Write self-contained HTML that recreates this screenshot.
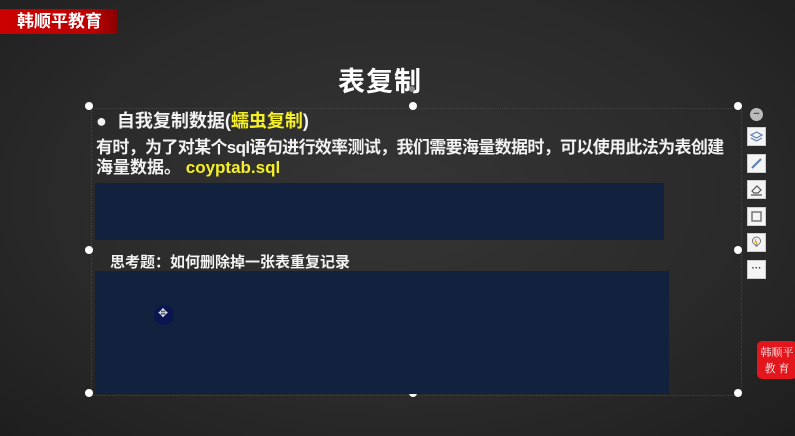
<!DOCTYPE html>
<html><head><meta charset="utf-8"><style>
*{margin:0;padding:0;box-sizing:border-box}
body{width:795px;height:436px;overflow:hidden;background:#2b2b2b;position:relative;font-family:"Liberation Sans","Noto Sans CJK SC",sans-serif;color:#f2f2f2;font-weight:bold}
.bg{position:absolute;inset:0;background:radial-gradient(ellipse at 50% 45%,#353535 0%,#2a2a2a 60%,#1e1e1e 100%)}
.logo{position:absolute;left:0;top:9px;width:117px;height:25px;background:linear-gradient(90deg,#c00 0%,#b00 80%,#8a0000 100%);color:#fff;font-size:17px;line-height:25px;padding-left:17px}
.title{position:absolute;left:338px;top:60px;font-size:27px;color:#fff;letter-spacing:1px}
.abs{position:absolute;white-space:nowrap}
.dot{position:absolute;width:8px;height:8px;border-radius:50%;background:#fff}
.blue{position:absolute;background:#12213d}
.y{color:#f5ef2a}
.tb{position:absolute;left:747px;width:19px;height:19px;background:#f4f4f4;border:1px solid #ccc}
.badge{position:absolute;left:757px;top:341px;width:40px;height:38px;background:#e2161c;border-radius:5px;color:#fff;font-family:"Noto Serif CJK SC",serif;font-size:11px;line-height:16px;text-align:center;padding-top:3px;font-weight:normal}
</style></head><body>
<div class="bg"></div>
<div class="logo">韩顺平教育</div>
<div class="title">表复制</div>
<div style="position:absolute;left:91px;top:108px;width:650px;height:1px;border-top:1px dotted #444"></div>
<div style="position:absolute;left:91px;top:108px;width:1px;height:288px;border-left:1px dotted #444"></div>
<div style="position:absolute;left:741px;top:108px;width:1px;height:288px;border-left:1px dotted #444"></div>
<div style="position:absolute;left:91px;top:395px;width:650px;height:1px;border-top:1px dotted #444"></div>
<div class="dot" style="left:85px;top:102px"></div>
<div class="dot" style="left:409px;top:102px"></div>
<div class="dot" style="left:734px;top:102px"></div>
<div class="dot" style="left:85px;top:246px"></div>
<div class="dot" style="left:734px;top:246px"></div>
<div class="dot" style="left:85px;top:389px"></div>
<div class="dot" style="left:409px;top:389px"></div>
<div class="dot" style="left:734px;top:389px"></div>
<div class="dot" style="left:409px;top:86px;width:6px;height:6px;background:#888"></div>
<div class="abs" style="left:96px;top:107px;font-size:18px">●&nbsp;&nbsp;自我复制数据(<span class="y">蠕虫复制</span>)</div>
<div class="abs" style="left:96px;top:133px;font-size:17px;letter-spacing:-0.65px">有时，为了对某个sql语句进行效率测试，我们需要海量数据时，可以使用此法为表创建</div>
<div class="abs" style="left:96px;top:153px;font-size:17px">海量数据。 <span class="y">coyptab.sql</span></div>
<div class="blue" style="left:95px;top:183px;width:569px;height:57px"></div>
<div class="abs" style="left:110px;top:251px;font-size:15px">思考题：如何删除掉一张表重复记录</div>
<div class="blue" style="left:95px;top:271px;width:574px;height:123px"></div>
<div style="position:absolute;left:154px;top:305px;width:20px;height:20px;border-radius:50%;background:#0b1650"></div>
<div class="abs" style="left:158px;top:306px;font-size:12px;color:#ddd;font-weight:normal">✥</div>
<div style="position:absolute;left:750px;top:108px;width:13px;height:13px;border-radius:50%;background:#bbb;color:#555;font-size:11px;line-height:12px;text-align:center">−</div>
<div class="tb" style="top:127px"></div>
<div class="tb" style="top:154px"></div>
<div class="tb" style="top:180px"></div>
<div class="tb" style="top:207px"></div>
<div class="tb" style="top:233px"></div>
<div class="tb" style="top:260px;font-size:10px;color:#444;text-align:center;line-height:16px">···</div>
<svg style="position:absolute;left:747px;top:127px" width="19" height="19"><path d="M4 8l5.5-3 5.5 3-5.5 3z M4 11l5.5 3 5.5-3" fill="none" stroke="#5a7fb0" stroke-width="1.2"/></svg>
<svg style="position:absolute;left:747px;top:154px" width="19" height="19"><path d="M5 14l9-9" stroke="#5a7fb0" stroke-width="2"/></svg>
<svg style="position:absolute;left:747px;top:180px" width="19" height="19"><path d="M5 11l5-5 4 4-3 3H7z M4 15h11" fill="none" stroke="#555" stroke-width="1.2"/></svg>
<svg style="position:absolute;left:747px;top:207px" width="19" height="19"><rect x="5" y="5" width="9" height="9" fill="none" stroke="#777" stroke-width="1.5"/></svg>
<svg style="position:absolute;left:747px;top:233px" width="19" height="19"><circle cx="9.5" cy="8" r="4" fill="none" stroke="#777"/><path d="M9 6l-1 3h2l-1 2" stroke="#e0a000" fill="none"/><path d="M8 13h3" stroke="#777"/></svg>
<div class="badge">韩顺平<br>教 育</div>
</body></html>
